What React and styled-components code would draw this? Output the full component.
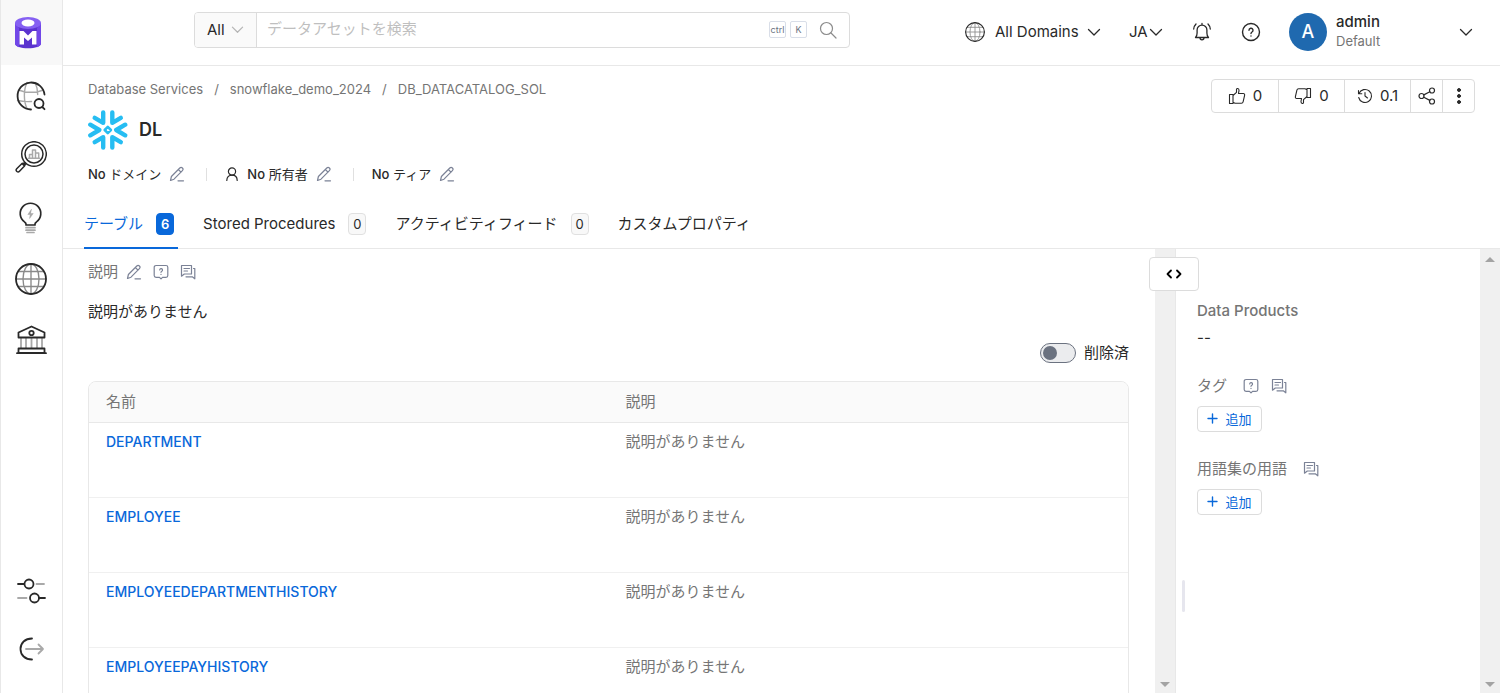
import React, { useState } from 'react'
import styled, { createGlobalStyle, css } from 'styled-components';

const tables = ['DEPARTMENT', 'EMPLOYEE', 'EMPLOYEEDEPARTMENTHISTORY', 'EMPLOYEEPAYHISTORY']

const crumbs = ['Database Services', 'snowflake_demo_2024', 'DB_DATACATALOG_SOL']

const tabs = [
    { key: 'table', label: 'テーブル', count: 6 },
    { key: 'stored', label: 'Stored Procedures', count: 0 },
    { key: 'activity', label: 'アクティビティフィード', count: 0 },
    { key: 'custom', label: 'カスタムプロパティ' },
]

/* ---------- icons ---------- */

const Icon = ({ size = 16, box = 16, stroke = 1, children }) => (
    <svg width={size} height={size} viewBox={`0 0 ${box} ${box}`} fill="none" stroke="currentColor"
        strokeWidth={stroke} strokeLinecap="round" strokeLinejoin="round" aria-hidden="true">
        {children}
    </svg>
)

const LogoIcon = () => (
    <svg width="28" height="34" viewBox="0 0 28 34" aria-hidden="true">
        <path d="M1 7v20.500c0 3 5.800 4.800 13 4.800s13-1.800 13-4.800V7z" fill="#5b33cf" />
        <path d="M1 7v20.500c0 1.500 1.500 2.800 4 3.700V12zM27 7v20.500c0 1.500-1.500 2.800-4 3.700V12z" fill="#7147e8" />
        <path d="M5.500 15h17v13.500h-17z" fill="#fff" />
        <path d="M9 14.500h10L14 19.500z" fill="#5b33cf" />
        <path d="M10 29v-7.500l4 3.500 4-3.500V29z" fill="#5b33cf" />
        <ellipse cx="14" cy="7" rx="13" ry="6" fill="#8560f2" />
        <ellipse cx="14" cy="7" rx="6.500" ry="3.400" fill="#fff" />
    </svg>
)

const ExploreIcon = () => (
    <Icon size={32} box={32} stroke={1.8}>
        <g stroke="#a9a9a9" strokeWidth="1.400">
            <path d="M12 2.500c-3.500 7-3.500 19 0 26M20 2.500c1.800 3.400 2.600 7.500 2.700 12M3.500 10c7 3 18 3 25 0M2.500 20.500c4 .9 9 1.300 14 1" />
        </g>
        <path d="M29.500 14.500A13.500 13.500 0 1 0 16 29.500" />
        <circle cx="24" cy="23.500" r="4.500" />
        <path d="M27.300 27l2.200 2.200" />
    </Icon>
)

const InsightsIcon = () => (
    <Icon size={32} box={32} stroke={1.5}>
        <circle cx="19" cy="13" r="12.300" />
        <circle cx="19" cy="13" r="9" />
        <path stroke="#a9a9a9" d="M14.500 17v-3.500h3V17M17.500 17V9h3v8M20.500 17v-5h3.200v5M13.500 17.200h11" />
        <path d="M10.300 21.700l-2 2M7 22.500l2.500 2.500-5 5.300a1.800 1.800 0 0 1-2.800-2.500zM7 22.500l2.500-.5 1 1-1 2" />
    </Icon>
)

const BulbIcon = () => (
    <Icon size={32} box={32} stroke={1.7}>
        <path d="M11 23v-1c0-1-.5-1.500-1.500-2.100A10.300 10.300 0 1 1 21.500 19.900C20.500 20.500 20 21 20 22v1z" />
        <path fill="#a9a9a9" stroke="#a9a9a9" strokeWidth=".5" d="M16.300 7.500l-3.500 5h2.400l-.6 4 3.600-5h-2.400z" />
        <path stroke="#a9a9a9" d="M11 25.700h9M11 28.200h9M12 30.500h7" />
    </Icon>
)

const GlobeIcon = ({ size = 32, line = 1.8 }) => (
    <Icon size={size} box={32} stroke={line}>
        <g stroke="#8a8a8a" strokeWidth={line * 0.75}>
            <path d="M16 1v30M1 16h30M3.500 8.500h25M3.500 23.500h25" />
            <ellipse cx="16" cy="16" rx="8" ry="15" />
        </g>
        <circle cx="16" cy="16" r="15" />
    </Icon>
)

const BankIcon = () => (
    <Icon size={32} box={32} stroke={1.8}>
        <path stroke="#a9a9a9" d="M6 14.500V24M11 14.500V24M16.500 14.500V24M22 14.500V24M27 14.500V24" />
        <path d="M3.500 13.500v-5L16.500 2.500l13 6v5z" />
        <circle cx="16.500" cy="9" r="2.200" />
        <path d="M3.500 24.500h26v4.500h-26zM2 29.200h29" />
    </Icon>
)

const SettingsIcon = () => (
    <Icon size={32} box={32} stroke={1.8}>
        <path d="M3 9h6M24 23h6" />
        <path stroke="#a9a9a9" d="M21.500 9H29M3 23h8.500" />
        <circle cx="14" cy="9" r="4.500" />
        <circle cx="19.500" cy="23" r="4.500" />
    </Icon>
)

const LogoutIcon = () => (
    <Icon size={32} box={32} stroke={1.8}>
        <path d="M17 5.500C10 5.500 5.500 10 5.500 16S10 26.500 17 26.500" />
        <path stroke="#a9a9a9" d="M11 16h17M23.500 11.500L28 16l-4.500 4.500" />
    </Icon>
)

const SearchIcon = () => (
    <Icon size={18} box={18} stroke={1.2}><circle cx="7.500" cy="7.500" r="6" /><path d="M12 12l5 5" /></Icon>
)

const ChevronIcon = ({ size = 14, line = 1.3 }) => (
    <Icon size={size} box={14} stroke={line}><path d="M1.500 4.500L7 10l5.500-5.500" /></Icon>
)

const BellIcon = () => (
    <Icon size={20} box={20} stroke={1.3}>
        <path d="M10 1.500v1.700M3.500 15.500c1.300-1.200 1.600-2.500 1.600-4.500V8a4.900 4.900 0 0 1 9.800 0v3c0 2 .3 3.300 1.600 4.500zM8 15.800c0 2.800 4 2.800 4 0" />
        <path d="M4 2C2.500 3.500 1.800 5 1.700 7M16 2c1.500 1.500 2.200 3 2.300 5" />
    </Icon>
)

const HelpIcon = () => (
    <Icon size={20} box={20} stroke={1.4}>
        <circle cx="10" cy="10" r="8.500" />
        <path d="M8 8.300a2 2 0 1 1 3 1.700c-.7.400-1 .8-1 1.500M10 13.900v.1" />
    </Icon>
)

const ThumbIcon = ({ down }) => (
    <Icon size={18} box={18} stroke={1.1}>
        <g transform={down ? 'rotate(180 9 9)' : undefined}>
            <path d="M1.500 7.500h3.500v9H1.500zM5 8.500l3.500-3.200V2.500c0-1.400 2.500-1.300 2.500.7 0 1.500-.5 2.300-.5 3.300h4.800c1 0 1.500.9 1.300 1.800l-1.500 6.500c-.2.900-.8 1.400-1.700 1.400H7l-2-1" />
        </g>
    </Icon>
)

const HistoryIcon = () => (
    <Icon size={16} box={16} stroke={1.1}>
        <path d="M2 5.500A6.500 6.500 0 1 1 1.700 9.500M1.500 2.500v3.300h3.300M8 4.500V8l2.500 2" />
    </Icon>
)

const ShareIcon = () => (
    <Icon size={18} box={18} stroke={1.2}>
        <circle cx="3.500" cy="9" r="2.500" /><circle cx="14" cy="3.500" r="2.500" /><circle cx="14" cy="14.500" r="2.500" />
        <path d="M5.800 7.900l6-3.200M5.800 10.200l6 3.200" />
    </Icon>
)

const MoreIcon = () => (
    <Icon size={18} box={18}>
        <g fill="currentColor"><circle cx="9" cy="3" r="1.500" /><circle cx="9" cy="9" r="1.500" /><circle cx="9" cy="15" r="1.500" /></g>
    </Icon>
)

const SnowflakeIcon = () => (
    <svg width="40" height="40" viewBox="0 0 40 40" fill="none" stroke="#26bdf2" strokeWidth="4.400"
        strokeLinecap="round" strokeLinejoin="round" aria-hidden="true">
        <path d="M15.200 2.500v10.300L6.700 7.800M24.300 2.500v10.300l8.500-5M15.200 37.500V27.200l-8.500 5M24.300 37.500V27.200l8.500 5" />
        <path d="M2.300 14.700l9 5.300-9 5.300M37.200 14.700l-9 5.300 9 5.300" />
        <path strokeWidth="2.600" d="M19.800 16.900l3.100 3.100-3.100 3.100-3.100-3.100z" />
    </svg>
)

const EditIcon = () => (
    <Icon size={16} box={16} stroke={1.2}>
        <path d="M1.500 14.500l.9-4L10.800 2a1.800 1.800 0 0 1 2.600 2.600L5 13.200zM9.300 3.500L12 6.200M9 14.800h5.500" />
    </Icon>
)

const RequestIcon = () => (
    <Icon size={16} box={16} stroke={1.2}>
        <path d="M3 1.500h10A1.800 1.800 0 0 1 14.800 3.300v8.200a1.800 1.800 0 0 1-1.800 1.800H9.500L8 14.800l-1.500-1.500H3a1.800 1.800 0 0 1-1.800-1.800V3.300A1.800 1.800 0 0 1 3 1.500z" />
        <path d="M6.700 6a1.400 1.400 0 1 1 2.100 1.200c-.6.300-.8.600-.8 1.100M8 10.300v.1" />
    </Icon>
)

const ChatIcon = () => (
    <Icon size={16} box={16} stroke={1.2}>
        <path d="M1.500 1.500h10v8.500H4.300L1.500 12.200zM4 4.500h5.500M4 7h3.500M13.500 4.500h1.300v10.300l-2.500-2H6" />
    </Icon>
)

const OwnerIcon = () => (
    <Icon size={14} box={14} stroke={1.2}>
        <circle cx="7" cy="4.500" r="3.600" /><path d="M1.800 13.400C1.800 10 4 8.100 7 8.100s5.200 1.900 5.200 5.300" />
    </Icon>
)

const CodeIcon = () => (
    <Icon size={16} box={16} stroke={1.800}><path d="M5 4.500L1.500 8 5 11.500M11 4.500L14.500 8 11 11.500" /></Icon>
)

const PlusIcon = () => (
    <Icon size={11} box={11} stroke={1.4}><path d="M5.500 1v9M1 5.500h9" /></Icon>
)

const Scrollbar = () => (
    <Track aria-hidden="true">
        <svg width="10" height="5" viewBox="0 0 10 5"><path d="M0 5l5-5 5 5z" fill="#a3a3a3" /></svg>
        <svg width="10" height="5" viewBox="0 0 10 5"><path d="M0 0l5 5 5-5z" fill="#a3a3a3" /></svg>
    </Track>
)

/* ---------- page ---------- */

const App = () => {
    const [active, setActive] = useState('table')
    const [search, setSearch] = useState('')
    const [deleted, setDeleted] = useState(false)

    return (
        <Page>
            <GlobalStyle />
            <Sidebar>
                <LogoLink href="#" aria-label="Home"><LogoIcon /></LogoLink>
                <NavList>
                    <NavLink href="#explore" aria-label="Explore"><ExploreIcon /></NavLink>
                    <NavLink href="#observability" aria-label="Observability"><InsightsIcon /></NavLink>
                    <NavLink href="#insights" aria-label="Insights"><BulbIcon /></NavLink>
                    <NavLink href="#domain" aria-label="Domains"><GlobeIcon /></NavLink>
                    <NavLink href="#govern" aria-label="Govern"><BankIcon /></NavLink>
                </NavList>
                <NavList $bottom>
                    <NavLink $short href="#settings" aria-label="Settings"><SettingsIcon /></NavLink>
                    <NavLink $short href="#logout" aria-label="Logout"><LogoutIcon /></NavLink>
                </NavList>
            </Sidebar>

            <Body>
                <TopBar>
                    <SearchBox>
                        <Scope type="button">All <ChevronIcon size={13} /></Scope>
                        <SearchInput aria-label="データアセットを検索" placeholder="データアセットを検索" value={search}
                            onChange={(e) => setSearch(e.target.value)} />
                        <Key>ctrl</Key>
                        <Key>K</Key>
                        <SearchButton type="button" aria-label="Search"><SearchIcon /></SearchButton>
                    </SearchBox>
                    <TopActions>
                        <DomainButton type="button"><GlobeIcon size={20} line={1.8} /><span>All Domains</span><ChevronIcon /></DomainButton>
                        <LangButton type="button">JA<ChevronIcon /></LangButton>
                        <IconButton type="button" aria-label="Notifications"><BellIcon /></IconButton>
                        <IconButton type="button" aria-label="Help"><HelpIcon /></IconButton>
                        <Profile type="button">
                            <Avatar>A</Avatar>
                            <ProfileText>
                                <UserName>admin</UserName>
                                <Persona>Default</Persona>
                            </ProfileText>
                            <ChevronIcon />
                        </Profile>
                    </TopActions>
                </TopBar>

                <EntityHeader>
                    <div>
                        <Breadcrumb aria-label="Breadcrumb">
                            {crumbs.map((c) => <li key={c}><a href="#crumb">{c}</a></li>)}
                        </Breadcrumb>
                        <TitleRow><SnowflakeIcon /><Title>DL</Title></TitleRow>
                        <MetaRow>
                            <MetaItem><span><b>No</b> ドメイン</span><MutedButton type="button" aria-label="Edit domain"><EditIcon /></MutedButton></MetaItem>
                            <MetaItem><OwnerIcon /><span><b>No</b> 所有者</span><MutedButton type="button" aria-label="Edit owner"><EditIcon /></MutedButton></MetaItem>
                            <MetaItem><span><b>No</b> ティア</span><MutedButton type="button" aria-label="Edit tier"><EditIcon /></MutedButton></MetaItem>
                        </MetaRow>
                    </div>
                    <ActionGroup>
                        <ActionButton type="button" aria-label="Up vote"><ThumbIcon />0</ActionButton>
                        <ActionButton type="button" aria-label="Down vote"><ThumbIcon down />0</ActionButton>
                        <ActionButton type="button" aria-label="Version"><HistoryIcon />0.1</ActionButton>
                        <ActionButton $narrow type="button" aria-label="Share"><ShareIcon /></ActionButton>
                        <ActionButton $narrow type="button" aria-label="More"><MoreIcon /></ActionButton>
                    </ActionGroup>
                </EntityHeader>

                <TabBar role="tablist">
                    {tabs.map((t) => (
                        <Tab key={t.key} type="button" role="tab" aria-selected={active === t.key} $active={active === t.key}
                            onClick={() => setActive(t.key)}>
                            {t.label}
                            {t.count !== undefined && <Count $active={active === t.key}>{t.count}</Count>}
                        </Tab>
                    ))}
                </TabBar>

                <Columns>
                    <Main>
                        <SectionHead>
                            <Label>説明</Label>
                            <MutedButton type="button" aria-label="Edit description"><EditIcon /></MutedButton>
                            <MutedButton type="button" aria-label="Request description"><RequestIcon /></MutedButton>
                            <MutedButton type="button" aria-label="Description conversation"><ChatIcon /></MutedButton>
                        </SectionHead>
                        <Description>説明がありません</Description>
                        <ToggleRow>
                            <Toggle id="deleted" type="checkbox" role="switch" checked={deleted} onChange={() => setDeleted(!deleted)} />
                            <label htmlFor="deleted">削除済</label>
                        </ToggleRow>
                        <TableFrame>
                            <Table>
                                <thead><tr><th>名前</th><th>説明</th></tr></thead>
                                <tbody>
                                    {tables.map((name) => (
                                        <tr key={name}>
                                            <td><a href="#table">{name}</a></td>
                                            <td>説明がありません</td>
                                        </tr>
                                    ))}
                                </tbody>
                            </Table>
                        </TableFrame>
                    </Main>
                    <Scrollbar />
                    <SidePanel>
                        <CollapseButton type="button" aria-label="Collapse panel"><CodeIcon /></CollapseButton>
                        <ResizeHandle />
                        <PanelSection>
                            <Label $strong>Data Products</Label>
                            <Empty>--</Empty>
                        </PanelSection>
                        <PanelSection>
                            <PanelHead>
                                <Label>タグ</Label>
                                <MutedButton type="button" aria-label="Request tags"><RequestIcon /></MutedButton>
                                <MutedButton type="button" aria-label="Tag conversation"><ChatIcon /></MutedButton>
                            </PanelHead>
                            <AddButton type="button"><PlusIcon />追加</AddButton>
                        </PanelSection>
                        <PanelSection>
                            <PanelHead>
                                <Label>用語集の用語</Label>
                                <MutedButton type="button" aria-label="Glossary conversation"><ChatIcon /></MutedButton>
                            </PanelHead>
                            <AddButton type="button"><PlusIcon />追加</AddButton>
                        </PanelSection>
                    </SidePanel>
                    <Scrollbar />
                </Columns>
            </Body>
        </Page>
    )
}

export default App

const GlobalStyle = createGlobalStyle`
    * { box-sizing: border-box; }
    body {
        margin: 0;
        background: #fff;
        color: #292929;
        font-family: Inter, "Noto Sans CJK JP", sans-serif;
        font-size: 15px;
        line-height: 22px;
    }
    button, input { font: inherit; color: inherit; }
    button { background: none; border: 0; padding: 0; cursor: pointer; }
    a { text-decoration: none; }
    svg { flex: none; display: block; }
`
const Page = styled.div`
    display: flex;
    height: 100vh;
    overflow: hidden;
`
const Sidebar = styled.aside`
    flex: none;
    width: 63px;
    display: flex;
    flex-direction: column;
    border-left: 1px solid #e8e8e8;
    border-right: 1px solid #e8e8e8;
`
const LogoLink = styled.a`
    height: 65px;
    display: flex;
    align-items: center;
    padding-left: 13px;
    background: #f8f8f8;
`
const NavList = styled.nav`
    display: flex;
    flex-direction: column;
    ${({ $bottom }) => $bottom && css`
        margin-top: auto;
        padding-bottom: 15px;
    `}
`
const NavLink = styled.a`
    height: ${({ $short }) => ($short ? '58px' : '61px')};
    display: flex;
    align-items: center;
    padding-left: 14px;
    color: #292929;
`
const Body = styled.div`
    flex: 1;
    min-width: 0;
    display: flex;
    flex-direction: column;
`
const TopBar = styled.header`
    flex: none;
    height: 66px;
    display: flex;
    align-items: center;
    justify-content: space-between;
    padding: 0 27px 6px 131px;
    border-bottom: 1px solid #e8e8e8;
`
const SearchBox = styled.div`
    flex: 0 1 656px;
    height: 36px;
    display: flex;
    align-items: center;
    border: 1px solid #dcdcdc;
    border-radius: 4px;
    overflow: hidden;
`
const Scope = styled.button`
    flex: none;
    width: 62px;
    height: 100%;
    display: flex;
    align-items: center;
    justify-content: space-between;
    padding: 0 12px;
    background: #fafafa;
    border-right: 1px solid #dcdcdc;
    svg { color: #b5b5b5; }
`
const SearchInput = styled.input`
    flex: 1;
    min-width: 0;
    padding: 0 10px 2px;
    border: 0;
    outline: none;
    background: transparent;
    &::placeholder { color: #bfbfbf; opacity: 1; }
`
const Key = styled.kbd`
    min-width: 17px;
    height: 17px;
    margin-right: 4px;
    border: 1px solid #d9dee8;
    border-radius: 2px;
    color: #6b7280;
    font-family: inherit;
    font-size: 9px;
    line-height: 15px;
    text-align: center;
`
const SearchButton = styled.button`
    margin: 0 12px 0 8px;
    color: #8c8c8c;
`
const TopActions = styled.div`
    display: flex;
    align-items: center;
    gap: 28px;
    padding-top: 4px;
`
const DomainButton = styled.button`
    min-width: 136px;
    display: flex;
    align-items: center;
    span { flex: 1; padding-left: 10px; text-align: left; }
`
const LangButton = styled.button`
    min-width: 34px;
    display: flex;
    align-items: center;
    justify-content: space-between;
`
const IconButton = styled.button`
    width: 21px;
    display: flex;
    justify-content: center;
`
const Profile = styled.button`
    width: 184px;
    display: flex;
    align-items: center;
    gap: 9px;
    text-align: left;
`
const Avatar = styled.span`
    width: 38px;
    height: 38px;
    border-radius: 50%;
    background: #1f69af;
    color: #fff;
    font-size: 18px;
    font-weight: 500;
    line-height: 38px;
    text-align: center;
`
const ProfileText = styled.span`
    flex: 1;
    display: flex;
    flex-direction: column;
`
const UserName = styled.span`
    font-weight: 500;
    line-height: 18px;
`
const Persona = styled.span`
    color: #757575;
    font-size: 13px;
    line-height: 20px;
`
const EntityHeader = styled.section`
    flex: none;
    display: flex;
    justify-content: space-between;
    align-items: flex-start;
    padding: 12px 25px 0;
`
const Breadcrumb = styled.ol`
    display: flex;
    margin: 0;
    padding: 0;
    list-style: none;
    font-size: 13px;
    color: #757575;
    a { color: inherit; }
    li + li::before { content: '/'; padding: 0 11px; }
`
const TitleRow = styled.div`
    display: flex;
    align-items: center;
    gap: 11px;
    padding-top: 10px;
`
const Title = styled.h1`
    margin: 0;
    font-size: 18px;
    font-weight: 600;
`
const MetaRow = styled.div`
    display: flex;
    padding-top: 13px;
    font-size: 13px;
`
const MetaItem = styled.div`
    display: flex;
    align-items: center;
    gap: 8px;
    b { font-weight: 500; }
    > span { white-space: nowrap; }
    & + &::before {
        content: '';
        width: 1px;
        height: 13px;
        margin: 0 10px 0 21px;
        background: #e0e0e0;
    }
`
const MutedButton = styled.button`
    color: #7b8296;
`
const ActionGroup = styled.div`
    display: flex;
    margin-top: 1px;
    border: 1px solid #dcdcdc;
    border-radius: 4px;
`
const ActionButton = styled.button`
    width: ${({ $narrow }) => ($narrow ? '32px' : '66px')};
    height: 32px;
    display: flex;
    align-items: center;
    justify-content: center;
    gap: 7px;
    padding-bottom: 1px;
    & + & { border-left: 1px solid #dcdcdc; }
`
const TabBar = styled.div`
    flex: none;
    height: 64px;
    display: flex;
    align-items: flex-end;
    gap: 25px;
    padding-left: 21px;
    border-bottom: 1px solid #e8e8e8;
`
const Tab = styled.button`
    height: 49px;
    display: flex;
    align-items: center;
    gap: 13px;
    padding-right: 4px;
    margin-bottom: -1px;
    border-bottom: 2px solid ${({ $active }) => ($active ? '#0968da' : 'transparent')};
    color: ${({ $active }) => ($active ? '#0968da' : '#292929')};
`
const Count = styled.span`
    min-width: 18px;
    height: 22px;
    border: 1px solid ${({ $active }) => ($active ? '#0968da' : '#e0e0e0')};
    border-radius: 4px;
    background: ${({ $active }) => ($active ? '#0968da' : '#f8f8f8')};
    color: ${({ $active }) => ($active ? '#fff' : '#292929')};
    font-size: 13px;
    font-weight: ${({ $active }) => ($active ? 600 : 400)};
    line-height: 20px;
    text-align: center;
`
const Columns = styled.div`
    flex: 1;
    min-height: 0;
    display: flex;
`
const Main = styled.main`
    flex: 1;
    min-width: 0;
    overflow: hidden;
    padding: 12px 26px 0 25px;
`
const SectionHead = styled.div`
    display: flex;
    align-items: center;
    gap: 11px;
    button:first-of-type { margin-left: -3px; }
`
const Label = styled.span`
    color: #757575;
    font-weight: ${({ $strong }) => ($strong ? 500 : 400)};
`
const Description = styled.p`
    margin: 0;
    padding-top: 18px;
`
const ToggleRow = styled.div`
    display: flex;
    align-items: center;
    justify-content: flex-end;
    gap: 8px;
    padding: 19px 0 17px;
`
const Toggle = styled.input`
    appearance: none;
    width: 36px;
    height: 20px;
    margin: 0;
    padding: 2px;
    display: flex;
    justify-content: ${({ checked }) => (checked ? 'flex-end' : 'flex-start')};
    border: 1px solid #6b7280;
    border-radius: 10px;
    background: #ebecee;
    cursor: pointer;
    &::before {
        content: '';
        width: 14px;
        height: 14px;
        border-radius: 50%;
        background: #6b7280;
    }
`
const TableFrame = styled.div`
    border: 1px solid #e8e8e8;
    border-radius: 8px 8px 0 0;
    overflow: hidden;
`
const Table = styled.table`
    width: 100%;
    table-layout: fixed;
    border-collapse: collapse;
    text-align: left;
    color: #757575;
    th {
        height: 40px;
        padding: 0 17px;
        background: #fafafa;
        border-bottom: 1px solid #e8e8e8;
        font-weight: 400;
    }
    td {
        height: 75px;
        padding: 8px 17px;
        border-bottom: 1px solid #f0f0f0;
        vertical-align: top;
    }
    a { color: #0968da; font-size: 14px; font-weight: 500; }
`
const Track = styled.div`
    flex: none;
    width: 20px;
    display: flex;
    flex-direction: column;
    justify-content: space-between;
    align-items: center;
    padding: 8px 0 6px;
    background: #f0f0f0;
`
const SidePanel = styled.aside`
    position: relative;
    flex: none;
    width: 305px;
    padding: 51px 21px 0;
    border-left: 1px solid #e8e8e8;
`
const CollapseButton = styled.button`
    position: absolute;
    top: 8px;
    left: -27px;
    width: 50px;
    height: 34px;
    display: flex;
    align-items: center;
    justify-content: center;
    background: #fff;
    border: 1px solid #dcdcdc;
    border-radius: 4px;
    color: #000;
`
const ResizeHandle = styled.div`
    position: absolute;
    left: 6px;
    bottom: 81px;
    width: 3px;
    height: 32px;
    border-radius: 2px;
    background: #e6e6ee;
`
const PanelSection = styled.section`
    & + & { padding-top: 26px; }
`
const Empty = styled.div`
    padding-top: 5px;
`
const PanelHead = styled.div`
    display: flex;
    align-items: center;
    gap: 12px;
    padding-bottom: 9px;
    span { padding-right: 4px; }
`
const AddButton = styled.button`
    width: 65px;
    height: 26px;
    display: flex;
    align-items: center;
    justify-content: center;
    gap: 7px;
    padding-bottom: 1px;
    border: 1px solid #dcdcdc;
    border-radius: 4px;
    color: #0968da;
    font-size: 13px;
`
